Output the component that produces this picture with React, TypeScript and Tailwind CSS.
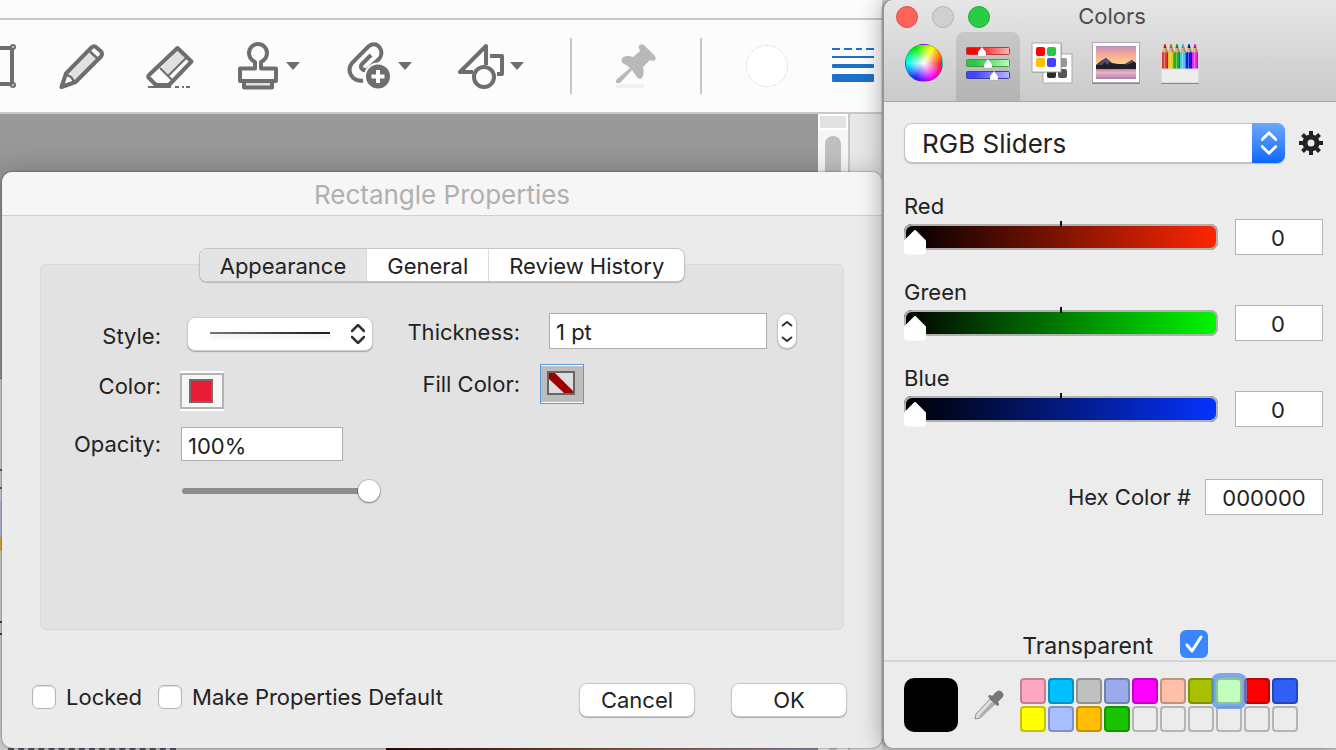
import React, { useState } from "react";

const channels = [
  {
    name: "Red",
    track:
      "[&::-webkit-slider-runnable-track]:bg-linear-to-r/srgb [&::-webkit-slider-runnable-track]:from-black [&::-webkit-slider-runnable-track]:to-[#ff2600]",
  },
  {
    name: "Green",
    track:
      "[&::-webkit-slider-runnable-track]:bg-linear-to-r/srgb [&::-webkit-slider-runnable-track]:from-black [&::-webkit-slider-runnable-track]:to-[#00f900]",
  },
  {
    name: "Blue",
    track:
      "[&::-webkit-slider-runnable-track]:bg-linear-to-r/srgb [&::-webkit-slider-runnable-track]:from-black [&::-webkit-slider-runnable-track]:to-[#0433ff]",
  },
];

const swatches = [
  { name: "Pink", color: "bg-[#ffa6c0] border-[#c28093]" },
  { name: "Sky", color: "bg-[#00bfff] border-[#0092c3]" },
  { name: "Gray", color: "bg-[#c0c0c0] border-[#929292]" },
  { name: "Periwinkle", color: "bg-[#99abe8] border-[#7582b1]" },
  { name: "Magenta", color: "bg-[#ff00ff] border-[#c300c3]" },
  { name: "Peach", color: "bg-[#ffbfa8] border-[#c29180]" },
  { name: "Olive", color: "bg-[#a8c000] border-[#809200]" },
  { name: "Mint", color: "bg-[#c0ffc0] border-[#92c392]", selected: true },
  { name: "Red", color: "bg-[#ff0000] border-[#c30000]" },
  { name: "Royal blue", color: "bg-[#2f5ff5] border-[#2347bb]" },
  { name: "Yellow", color: "bg-[#ffff00] border-[#c3c300]" },
  { name: "Light blue", color: "bg-[#a8bfff] border-[#8091c3]" },
  { name: "Amber", color: "bg-[#ffbf00] border-[#c39200]" },
  { name: "Green", color: "bg-[#19c400] border-[#139500]" },
  { name: "Empty 1", color: "bg-[#ececec] border-[#b4b4b4]" },
  { name: "Empty 2", color: "bg-[#ececec] border-[#b4b4b4]" },
  { name: "Empty 3", color: "bg-[#ececec] border-[#b4b4b4]" },
  { name: "Empty 4", color: "bg-[#ececec] border-[#b4b4b4]" },
  { name: "Empty 5", color: "bg-[#ececec] border-[#b4b4b4]" },
  { name: "Empty 6", color: "bg-[#ececec] border-[#b4b4b4]" },
];

const MarqueeIcon = () => (
  <svg width="16" height="48" fill="none" stroke="#6e6e6e">
    <path d="M0 6H12V42H0" strokeWidth="4" />
    <circle cx="13" cy="5" r="2" fill="#e0e0e0" strokeWidth="2" />
    <circle cx="13" cy="43" r="2" fill="#e0e0e0" strokeWidth="2" />
  </svg>
);

const PencilIcon = () => (
  <svg width="44" height="48" fill="none" stroke="#6e6e6e" className="overflow-visible">
    <path d="M10 31L31 10L38 16L16 38Z" fill="#e0e0e0" stroke="none" />
    <path
      d="M1.500 45L6 31.500L31.500 5.500Q34 3 36.500 5.500L41 9.500Q43 12 41 14.500L15.500 40Z"
      strokeWidth="4"
      strokeLinejoin="round"
    />
    <path d="M30 9.500L38 17M7 33Q12 34 14 40" strokeWidth="2.500" />
    <path d="M0 47L2.500 38L8 44Z" fill="#6e6e6e" stroke="none" />
  </svg>
);

const EraserIcon = () => (
  <svg width="46" height="48" fill="none" stroke="#6e6e6e" className="overflow-visible">
    <path d="M13 26L30 8L39 17L22 34Z" fill="#e0e0e0" stroke="none" />
    <path d="M22 34L36 20L41 21L26 36Z" fill="#fcfcfc" stroke="none" />
    <path
      d="M29.500 6L43.500 19.500L21 43H8L0.500 35.500Q0 34 1 33Z"
      strokeWidth="4"
      strokeLinejoin="round"
    />
    <path d="M12 26L24 38M20 34L38 16" strokeWidth="2" />
    <path d="M0 45H23M27 45H31M34 45H36M38 45H42" strokeWidth="2" />
  </svg>
);

const StampIcon = () => (
  <svg width="64" height="48" fill="none" stroke="#6e6e6e" strokeWidth="4">
    <path
      d="M2 39V26.500H17V20Q11 17 11 11a9 9 0 0 1 18 0Q29 17 23 20V26.500H38V39Z"
      strokeLinejoin="round"
    />
    <path d="M6 39H34V45.500H6Z" fill="#e0e0e0" strokeLinejoin="round" />
    <path d="M48 20H62L55 28Z" fill="#6e6e6e" stroke="none" />
  </svg>
);

const AttachIcon = () => (
  <svg width="68" height="48" fill="none" stroke="#6e6e6e">
    <path
      d="M17 38.500C6 40 0 29 6 21L21 6C25 1 31 1 34 6C36 9 36 14 33 17L22 27C18 30 13 26 16 22L25 13"
      strokeWidth="4"
    />
    <circle cx="32" cy="34.500" r="14" fill="#fcfcfc" stroke="none" />
    <circle cx="32" cy="34.500" r="12" fill="#6e6e6e" stroke="none" />
    <path d="M25.500 34.500H38.500M32 28V41" stroke="#fff" strokeWidth="4" />
    <path d="M52 20H66L59 28Z" fill="#6e6e6e" stroke="none" />
  </svg>
);

const ShapesIcon = () => (
  <svg width="68" height="48" fill="none" stroke="#6e6e6e" strokeWidth="4">
    <path d="M28 23V4L2 30H15" strokeLinejoin="round" />
    <path d="M32 14H44V32H39" strokeLinejoin="round" />
    <circle cx="26" cy="35" r="10" />
    <path d="M52 20H66L59 28Z" fill="#6e6e6e" stroke="none" />
  </svg>
);

const PinIcon = () => (
  <svg width="40" height="48" fill="#b8b8b8" className="overflow-visible">
    <path d="M0 42H28V46H0Z" fill="#f0f0f0" />
    <path
      d="M5.500 19C5 14 12 13 17 15L24 9L22.500 5Q24 1 28 3L39 14Q41 18 37 19L34 18L27 25C28 30 28 35 24.500 37C22 37 20 34 18 31L16 28L4 41H0V38L14 26L10 23C8 22 6 21 5.500 19Z"
    />
  </svg>
);

const LineWeightIcon = () => (
  <svg width="42" height="48" fill="#1b72c8">
    <path d="M0 6H8V8H0ZM12 6H20V8H12ZM24 6H30V8H24ZM34 6H42V8H34Z" />
    <path d="M0 14H42V16H0Z" />
    <rect y="22" width="42" height="4" rx="1" />
    <rect y="32" width="42" height="8" rx="1" />
  </svg>
);

const SliderTabIcon = () => (
  <svg width="44" height="40">
    <defs>
      <linearGradient id="tab-red">
        <stop offset=".2" stopColor="#ff0000" />
        <stop offset="1" stopColor="#ffb8b8" />
      </linearGradient>
      <linearGradient id="tab-green">
        <stop offset=".2" stopColor="#2cc744" />
        <stop offset="1" stopColor="#b8ffb8" />
      </linearGradient>
      <linearGradient id="tab-blue">
        <stop offset=".2" stopColor="#4048ff" />
        <stop offset="1" stopColor="#b8b8ff" />
      </linearGradient>
    </defs>
    <rect x=".5" y="4.500" width="43" height="7" rx="1" fill="url(#tab-red)" stroke="#b44040" />
    <rect x=".5" y="16.500" width="43" height="7" rx="1" fill="url(#tab-green)" stroke="#409a48" />
    <rect x=".5" y="28.500" width="43" height="7" rx="1" fill="url(#tab-blue)" stroke="#4040a4" />
    <g fill="#fff" stroke="#0003" strokeWidth=".5">
      <path d="M12 13V9L16 4L20 9V13Z" />
      <path d="M18 25V21L22 16L26 21V25Z" />
      <path d="M24 37V33L28 28L32 33V37Z" />
    </g>
  </svg>
);

const PaletteTabIcon = () => (
  <svg width="42" height="42" className="overflow-visible">
    <rect x="12" y="12" width="29" height="29" fill="#fff" stroke="#aaa" />
    <rect x="27" y="16" width="9" height="9" rx="2" fill="#999" />
    <rect x="16" y="27" width="9" height="9" rx="2" fill="#2c2c2c" />
    <rect x="27" y="27" width="9" height="9" rx="2" fill="#555" />
    <rect x="2" y="2" width="29" height="29" fill="#0003" />
    <rect x="1" y="1" width="29" height="29" fill="#fff" stroke="#aaa" />
    <rect x="5" y="5" width="9" height="9" rx="2" fill="#ff0000" />
    <rect x="16" y="5" width="9" height="9" rx="2" fill="#28c840" />
    <rect x="5" y="16" width="9" height="9" rx="2" fill="#ffbf00" />
    <rect x="16" y="16" width="9" height="9" rx="2" fill="#4040ff" />
  </svg>
);

const ImageTabIcon = () => (
  <svg width="48" height="42">
    <defs>
      <linearGradient id="sky" x2="0" y2="1">
        <stop stopColor="#b892c4" />
        <stop offset=".3" stopColor="#f0a0a0" />
        <stop offset="1" stopColor="#ffd880" />
      </linearGradient>
      <linearGradient id="lake" x2="0" y2="1">
        <stop stopColor="#b07898" />
        <stop offset=".4" stopColor="#e8b4c8" />
        <stop offset="1" stopColor="#b080ac" />
      </linearGradient>
    </defs>
    <rect x=".5" y=".5" width="47" height="40" fill="#fff" stroke="#aaa" />
    <path d="M0 41.500H48" stroke="#888" />
    <rect x="4" y="4" width="40" height="20" fill="url(#sky)" />
    <rect x="4" y="26" width="40" height="11" fill="url(#lake)" />
    <path d="M4 23L9 19L14 16L20 21L26 22L33 22L40 18L44 21V27H4Z" fill="#201e28" />
    <path d="M5 23L14 16L18 20L15 23L13 20L10 23ZM32 23L40 18L42 20L37 22Z" fill="#5a4870" />
  </svg>
);

const pencilColors = ["#dd3a3a", "#e4c81e", "#22b022", "#48c8f0", "#1818e0", "#e828e8"];
const pencilTips = ["#c81010", "#907810", "#108a10", "#20a8d0", "#1010b0", "#c010c0"];

const PencilsTabIcon = () => (
  <svg width="38" height="42">
    {pencilColors.map((color, index) => {
      return (
        <g key={color} transform={`translate(${1 + index * 6} 1)`}>
          <path d="M0 10V9L2 3H4L6 9V10Z" fill="#dcb88c" />
          <path d="M3 4H4L6 9V10H4Z" fill="#a88458" />
          <path d="M1.500 5L2.500 1H3.500L4.500 5Z" fill={pencilTips[index]} />
          <path d="M0 26V10Q1.500 8 3 10Q4.500 8 6 10V26Z" fill={color} />
          <path d="M5 10H6V26H5Z" fill="#0004" />
          <path d="M2 10H3V26H2Z" fill="#fff5" />
        </g>
      );
    })}
    <path d="M.5 27H37.500V40.500H.5Z" fill="#ededed" stroke="#dadada" />
    <path d="M0 41.500H38" stroke="#888" />
  </svg>
);

const GearIcon = () => (
  <svg width="24" height="24" viewBox="-12 -12 24 24" fill="none" stroke="#222">
    <circle r="6" strokeWidth="5" />
    <path
      d="M0 -12V-7M0 12V7M-12 0H-7M12 0H7M-8.500 -8.500L-5 -5M8.500 8.500L5 5M-8.500 8.500L-5 5M8.500 -8.500L5 -5"
      strokeWidth="4"
    />
  </svg>
);

const DropperIcon = () => (
  <svg width="30" height="30">
    <path d="M1 29L2 24L16 9L21 14L6 28Z" fill="#dedede" stroke="#8c8c8c" />
    <path d="M5 26L18 12L20 14L6 27Z" fill="#aaa" />
    <path
      d="M14 6Q16 4 18 6L22 2Q25 -1 28 2Q31 5 28 8L24 12Q26 14 24 16L22 15L15 8Z"
      fill="#777"
    />
  </svg>
);

const pickerTabs = [
  {
    name: "Color Wheel",
    icon: (
      <span className="size-[38px] rounded-full border border-black/20 bg-[radial-gradient(circle,#fff_0%,#fff0_65%),conic-gradient(from_90deg,#f22,#f0f,#22f,#0ff,#0e0,#ff0,#f22)]" />
    ),
  },
  { name: "Color Sliders", icon: <SliderTabIcon />, active: true },
  { name: "Color Palettes", icon: <PaletteTabIcon /> },
  { name: "Image Palettes", icon: <ImageTabIcon /> },
  { name: "Pencils", icon: <PencilsTabIcon /> },
];

const Toolbar = () => (
  <header className="relative bg-[#fcfcfc]">
    <div className="h-5 border-b-2 border-[#c8c8c8]" />
    <div className="flex h-[94px] items-center gap-11 border-b-2 border-[#c8c8c8]">
      <button aria-label="Select area"><MarqueeIcon /></button>
      <button aria-label="Pencil"><PencilIcon /></button>
      <button aria-label="Eraser"><EraserIcon /></button>
      <button aria-label="Stamp"><StampIcon /></button>
      <button aria-label="Attach"><AttachIcon /></button>
      <button aria-label="Shapes"><ShapesIcon /></button>
      <span className="h-14 w-0.5 shrink-0 bg-[#c8c8c8]" />
      <button aria-label="Pin"><PinIcon /></button>
      <span className="h-14 w-0.5 shrink-0 bg-[#c8c8c8]" />
      <button
        aria-label="Color"
        className="size-[42px] shrink-0 rounded-full border border-dotted border-[#c4d4ea] bg-white"
      />
      <button aria-label="Line thickness"><LineWeightIcon /></button>
    </div>
  </header>
);

/* the document window that stays visible round the dialog */
const DocumentBackdrop = () => (
  <div className="absolute inset-0 flex overflow-hidden bg-[#989898]">
    <div className="flex flex-1 flex-col bg-linear-to-b from-[#9a9a9a] to-[#949494] to-10%">
      <div className="mt-66 flex flex-1 flex-col justify-between border-t border-[#777] bg-[#d0d0d0]">
        <div className="flex w-0.5 flex-col">
          <span className="mt-[90px] h-0.5 bg-[#1b7c60]" />
          <span className="mt-4 h-0.5 bg-[#1b7c60]" />
          <span className="mt-3 h-9 bg-[#b8bcdc]" />
          <span className="h-3.5 bg-[#d8b040]" />
          <span className="mt-[70px] h-3.5 border-y-2 border-[#444]" />
        </div>
        <div className="flex h-0.5">
          <span className="ml-2 w-42 border-t-2 border-dashed border-[#555a66]" />
          <span className="ml-[210px] flex-1 bg-linear-to-r from-[#2c1010] via-[#8c5840] to-[#9090a8]" />
        </div>
      </div>
    </div>
    <div className="flex w-8 flex-col border-r-2 border-[#c8c8c8] bg-[#f6f6f6]">
      <div className="h-4 border-2 border-white bg-[#e2e2e2]" />
      <div className="mx-[7px] mt-1.5 flex-1 rounded-full bg-[#bfbfbf]" />
    </div>
    <div className="w-8 bg-[#e8e8e8]" />
  </div>
);

const UpDown = ({ className }: { className: string }) => (
  <svg
    viewBox="0 0 14 20"
    fill="none"
    strokeLinecap="round"
    strokeLinejoin="round"
    className={className}
  >
    <path d="M1 7L7 1L13 7M1 13L7 19L13 13" />
  </svg>
);

const PropertiesDialog = () => {
  const [tab, setTab] = useState("Appearance");

  return (
    <section
      aria-label="Rectangle Properties"
      className="relative mt-[58px] mb-0.5 ml-0.5 flex flex-1 flex-col overflow-hidden rounded-[10px] bg-[#ebebeb] shadow-[0_0_2px_#0009,0_0_24px_#0003]"
    >
      <h1 className="flex h-11 items-center justify-center border-b border-[#d0d0d0] bg-[#f6f6f6] pt-0.5 text-[26px] text-[#b0b0b0]">
        Rectangle Properties
      </h1>
      <div className="flex flex-1 flex-col px-[38px] pt-8">
        <div
          role="tablist"
          className="relative -mb-[18px] flex h-[34px] self-center overflow-hidden rounded-lg border border-[#c4c4c4] bg-white text-[22px] shadow-[0_1px_1px_#0003]"
        >
          {["Appearance", "General", "Review History"].map((name) => {
            return (
              <button
                key={name}
                role="tab"
                aria-selected={tab === name}
                onClick={() => setTab(name)}
                className="border-l border-[#dcdcdc] px-5 pt-px first:border-l-0 aria-selected:bg-[#e4e4e4]"
              >
                {name}
              </button>
            );
          })}
        </div>

        <div className="flex flex-1 rounded-md border border-[#d9d9d9] bg-[#e2e2e2] pt-12 text-[22px]">
          <div className="flex flex-col pt-1">
            <div className="flex h-[34px] items-center">
              <label htmlFor="style" className="w-[120px] pt-1 text-right">
                Style:
              </label>
              <div className="relative ml-[26px] flex">
                <select
                  id="style"
                  className="h-[34px] w-[186px] appearance-none rounded-lg border border-[#ccc] bg-white shadow-[0_1px_1px_#0004]"
                >
                  <option aria-label="Solid line" />
                </select>
                <span className="pointer-events-none absolute top-[15px] left-[23px] h-0.5 w-[120px] bg-linear-to-r from-[#777] to-[#1c1c1c] shadow-[0_3px_5px_#0002]" />
                <UpDown className="pointer-events-none absolute top-[7px] right-2 h-5 w-3.5 stroke-[#333] stroke-[2.5]" />
              </div>
            </div>
            <div className="mt-5 flex h-10 items-center">
              <span id="color-label" className="w-[120px] pb-2.5 text-right">
                Color:
              </span>
              <button
                aria-labelledby="color-label"
                className="ml-[19px] flex h-10 w-11 items-center justify-center border-y-2 border-white"
              >
                <span className="flex size-full items-center justify-center border-2 border-[#b4b4b4] bg-[#f6f6f6] pr-0.5">
                  <span className="size-6 border-2 border-[#806468] bg-[#e81c34]" />
                </span>
              </button>
            </div>
            <div className="mt-4 flex h-[34px] items-center">
              <label htmlFor="opacity" className="w-[120px] text-right">
                Opacity:
              </label>
              <input
                id="opacity"
                defaultValue="100%"
                className="ml-5 h-[34px] w-[162px] border border-[#acacac] bg-white px-1.5 pt-1"
              />
            </div>
            <input
              type="range"
              aria-label="Opacity"
              defaultValue={100}
              className="mt-[18px] ml-[141px] h-6 w-[198px] appearance-none bg-transparent [&::-webkit-slider-runnable-track]:h-1.5 [&::-webkit-slider-runnable-track]:rounded-full [&::-webkit-slider-runnable-track]:bg-[#8c8c8c] [&::-webkit-slider-thumb]:-mt-2 [&::-webkit-slider-thumb]:size-[22px] [&::-webkit-slider-thumb]:appearance-none [&::-webkit-slider-thumb]:rounded-full [&::-webkit-slider-thumb]:bg-white [&::-webkit-slider-thumb]:shadow-[0_0_0_1px_#0002,0_1px_2px_#0006]"
            />
          </div>

          <div className="-ml-2 flex flex-col">
            <div className="flex h-9 items-center">
              <label htmlFor="thickness" className="w-[148px] pt-0.5 text-right">
                Thickness:
              </label>
              <input
                id="thickness"
                defaultValue="1 pt"
                className="ml-[29px] h-9 w-[218px] border border-[#acacac] bg-white px-1.5 pt-0.5"
              />
              <button
                aria-label="Change thickness"
                className="ml-2.5 flex h-9 w-5 items-center justify-center rounded-full border border-[#c4c4c4] bg-white shadow-[0_1px_1px_#0003]"
              >
                <svg width="12" height="24" fill="none" stroke="#333" strokeWidth="2">
                  <path d="M1 7L6 3L11 7M1 18L6 22L11 18" />
                </svg>
              </button>
            </div>
            <div className="mt-[15px] flex h-10 items-center">
              <span id="fill-label" className="w-[148px] text-right">
                Fill Color:
              </span>
              <button
                aria-labelledby="fill-label"
                className="ml-5 flex h-10 w-11 items-center justify-center border border-[#5c9ae0] bg-[#bcbcbc] pr-0.5 pb-0.5 shadow-[inset_0_1px_0_#fff,inset_0_-1px_0_#fff]"
              >
                <svg width="28" height="24">
                  <rect x="1" y="1" width="26" height="22" fill="#ddd" />
                  <path d="M2 2H8L26 20V22H17L2 8Z" fill="#a00000" />
                  <rect x="1" y="1" width="26" height="22" fill="none" stroke="#666" strokeWidth="2" />
                </svg>
              </button>
            </div>
          </div>
        </div>
      </div>

      <div className="flex items-center px-[30px] pt-[53px] pr-[35px] pb-[31px] text-[22px]">
        <div className="-mt-1.5 flex flex-1 items-center">
          <input
            id="locked"
            type="checkbox"
            className="size-6 appearance-none rounded-md border border-[#b4b4b4] bg-white shadow-[inset_0_1px_1px_#0002]"
          />
          <label htmlFor="locked" className="ml-2.5">
            Locked
          </label>
          <input
            id="make-default"
            type="checkbox"
            className="ml-4 size-6 appearance-none rounded-md border border-[#b4b4b4] bg-white shadow-[inset_0_1px_1px_#0002]"
          />
          <label htmlFor="make-default" className="ml-2.5">
            Make Properties Default
          </label>
        </div>
        <button className="flex h-[34px] w-[116px] items-center justify-center rounded-lg border border-[#c8c8c8] bg-white shadow-[0_1px_1px_#0004]">
          Cancel
        </button>
        <button className="ml-9 flex h-[34px] w-[116px] items-center justify-center rounded-lg border border-[#c8c8c8] bg-white shadow-[0_1px_1px_#0004]">
          OK
        </button>
      </div>
    </section>
  );
};

const ColorsPanel = () => (
  <aside
    aria-label="Colors"
    className="relative mb-0.5 flex w-[454px] shrink-0 flex-col rounded-l-[10px] border-l-2 border-[#949494] bg-[#ececec] text-[22px] shadow-[0_0_2px_#0006,0_0_24px_#0005]"
  >
    <header className="flex h-[102px] flex-col rounded-tl-[10px] border-b border-[#a8a8a8] bg-linear-to-b from-[#e6e6e6] to-[#cacaca]">
      <div className="grid h-8 grid-cols-[1fr_auto_1fr] items-center pr-2 pl-3">
        <div className="flex gap-3.5">
          <button aria-label="Close" className="size-[22px] rounded-full border border-[#dc5048] bg-[#ff6259]" />
          <button aria-label="Minimize" className="size-[22px] rounded-full border border-[#b4b4b4] bg-[#d0d0d0]" />
          <button aria-label="Zoom" className="size-[22px] rounded-full border border-[#20ac34] bg-[#29cc42]" />
        </div>
        <h2 className="text-[#4c4c4c]">Colors</h2>
      </div>
      <div className="flex flex-1 px-2">
        {pickerTabs.map((item) => {
          return (
            <button
              key={item.name}
              aria-label={item.name}
              aria-pressed={!!item.active}
              className="flex w-16 items-center justify-center rounded-t-lg pb-2 aria-pressed:bg-linear-to-b aria-pressed:from-[#c8c8c8] aria-pressed:to-[#b4b4b4]"
            >
              {item.icon}
            </button>
          );
        })}
      </div>
    </header>

    <div className="flex flex-1 flex-col pt-[21px] pr-[13px] pl-5">
      <div className="flex items-center justify-between">
        <div className="relative flex w-[381px]">
          <select
            aria-label="Slider type"
            className="h-10 w-full appearance-none rounded-lg border border-[#c4c4c4] bg-white pl-[17px] text-[26px] shadow-[0_1px_1px_#0003]"
          >
            <option>RGB Sliders</option>
          </select>
          <span className="pointer-events-none absolute inset-y-0 right-0 flex w-[33px] items-center justify-center rounded-r-lg bg-linear-to-b from-[#6aa8fb] to-[#0866fb]">
            <UpDown className="h-6 w-4 stroke-white stroke-[2.5]" />
          </span>
        </div>
        <button aria-label="Options"><GearIcon /></button>
      </div>

      <div className="mt-7 flex flex-col gap-[22px]">
        {channels.map((channel) => {
          return (
            <div key={channel.name} className="flex h-16 items-end justify-between">
              <div className="relative flex flex-col">
                <label htmlFor={channel.name} className="h-8 leading-[30px]">
                  {channel.name}
                </label>
                <input
                  id={channel.name}
                  type="range"
                  min={0}
                  max={255}
                  defaultValue={0}
                  className={`mb-[5px] h-[27px] w-[314px] appearance-none bg-transparent [&::-webkit-slider-runnable-track]:h-[26px] [&::-webkit-slider-runnable-track]:rounded-lg [&::-webkit-slider-runnable-track]:shadow-[inset_0_0_0_2px_#b0b0b0] [&::-webkit-slider-thumb]:mt-1.5 [&::-webkit-slider-thumb]:h-[25px] [&::-webkit-slider-thumb]:w-[22px] [&::-webkit-slider-thumb]:appearance-none [&::-webkit-slider-thumb]:rounded-sm [&::-webkit-slider-thumb]:bg-white [&::-webkit-slider-thumb]:[clip-path:polygon(50%_0,100%_44%,100%_100%,0_100%,0_44%)] ${channel.track}`}
                />
                <span className="pointer-events-none absolute top-[30px] left-[156px] h-1.5 w-0.5 bg-[#111]" />
              </div>
              <input
                aria-label={`${channel.name} value`}
                defaultValue="0"
                className="h-9 w-[88px] border border-[#b4b4b4] bg-white pt-0.5 pr-0.5 text-center"
              />
            </div>
          );
        })}
      </div>

      <div className="mt-[52px] flex items-center justify-end gap-3.5">
        <label htmlFor="hex">Hex Color #</label>
        <input
          id="hex"
          defaultValue="000000"
          className="h-9 w-[118px] border border-[#b4b4b4] bg-white pt-0.5 text-center"
        />
      </div>

      <div className="mt-auto mb-0.5 flex items-center justify-end gap-[27px] pr-[115px]">
        <label htmlFor="transparent" className="pt-1 text-[23px] leading-6">
          Transparent
        </label>
        <span className="relative flex">
          <input
            id="transparent"
            type="checkbox"
            defaultChecked
            className="size-7 appearance-none rounded-md bg-[#3b86fd]"
          />
          <svg
            width="28"
            height="28"
            fill="none"
            stroke="#fff"
            strokeWidth="3"
            strokeLinecap="round"
            strokeLinejoin="round"
            className="pointer-events-none absolute inset-0"
          >
            <path d="M7 15L12 21L21 7" />
          </svg>
        </span>
      </div>
    </div>

    <footer className="flex items-center border-t-2 border-[#d4d4d4] px-5 py-4">
      <div className="size-[54px] rounded-[10px] bg-black" />
      <button aria-label="Pick a color" className="ml-4">
        <DropperIcon />
      </button>
      <div className="ml-4 grid grid-cols-10 gap-0.5">
        {swatches.map((swatch) => {
          return (
            <button
              key={swatch.name}
              aria-label={swatch.name}
              aria-pressed={!!swatch.selected}
              className={`size-[26px] rounded border-2 aria-pressed:relative aria-pressed:shadow-[0_0_0_5px_#5090eabb] ${swatch.color}`}
            />
          );
        })}
      </div>
    </footer>
  </aside>
);

const App = () => {
  return (
    <main className="flex min-h-screen overflow-hidden bg-[#d0d0d0] font-['Inter','Liberation_Sans',sans-serif] text-[#222]">
      <div className="flex min-w-0 flex-1 flex-col">
        <Toolbar />
        <div className="relative flex flex-1 flex-col">
          <DocumentBackdrop />
          <PropertiesDialog />
        </div>
      </div>
      <ColorsPanel />
    </main>
  );
};

export default App;
